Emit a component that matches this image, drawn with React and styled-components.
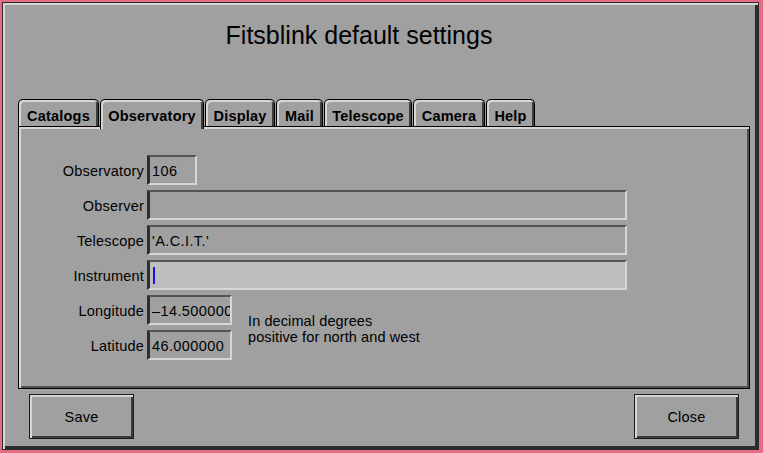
import React from "react";
import styled, { createGlobalStyle } from "styled-components";

const GlobalStyle = createGlobalStyle`
  html, body {
    margin: 0;
    padding: 0;
    background: #a0a0a0;
  }
  body {
    font-family: "Liberation Sans", Arial, sans-serif;
    color: #000;
  }
`;

const Frame = styled.div`
  width: 763px;
  height: 453px;
  box-sizing: border-box;
  border-style: solid;
  border-color: #e46c84;
  border-width: 2px 4px 3px 2px;
  display: flex;
`;

const Window = styled.div`
  flex: 1;
  display: flex;
  flex-direction: column;
  background: #a0a0a0;
  border: 1px solid #2c2c2c;
  box-shadow: inset 2px 2px 0 #d6d6d6, inset -3px -3px 0 #2c2c2c;
`;

const Title = styled.div`
  height: 96px;
  box-sizing: border-box;
  padding: 17px 43px 0 0;
  text-align: center;
  font-size: 25px;
  line-height: 30px;
`;

const TabBar = styled.div`
  height: 27px;
  display: flex;
  align-items: flex-start;
  padding-left: 15px;
  position: relative;
  z-index: 1;
`;

const Tab = styled.div`
  width: ${(p) => p.$w}px;
  height: ${(p) => (p.$active ? 30 : 27)}px;
  box-sizing: border-box;
  margin-right: 1px;
  border: 1px solid #000;
  border-bottom: none;
  border-radius: 5px 5px 0 0;
  background: #a0a0a0;
  box-shadow: inset 2px 2px 0 #d6d6d6, inset -2px 0 0 #3c3c3c;
  font-weight: bold;
  font-size: 14.5px;
  letter-spacing: 0.2px;
  text-align: center;
  padding-top: 8px;
  line-height: 16px;
`;

const Panel = styled.div`
  margin: 0 8px 0 15px;
  height: 263px;
  box-sizing: border-box;
  border: 1px solid #000;
  box-shadow: inset 2px 2px 0 #d6d6d6, inset -2px -2px 0 #505050;
  padding-top: 28px;
`;

const Row = styled.div`
  display: flex;
  align-items: center;
  height: 30px;
  margin-bottom: 5px;
`;

const Label = styled.div`
  width: 125px;
  margin-right: 3px;
  padding-top: 2px;
  text-align: right;
  font-size: 14.5px;
  letter-spacing: 0.2px;
`;

const Field = styled.div`
  width: ${(p) => p.$w}px;
  height: 30px;
  box-sizing: border-box;
  border-style: solid;
  border-width: 2px 2px 2px 3px;
  border-color: #545454 #d6d6d6 #d6d6d6 #2e2e2e;
  background: ${(p) => (p.$focus ? "#bebebe" : "#a0a0a0")};
  padding: 2px 0 0 2px;
  display: flex;
  align-items: center;
  overflow: hidden;
  white-space: nowrap;
  font-size: 14.5px;
  letter-spacing: 0.4px;
`;

const Cursor = styled.span`
  display: inline-block;
  width: 2px;
  height: 17px;
  background: #1414e6;
  margin: -2px 0 0 1px;
`;

const Group = styled.div`
  display: flex;
  align-items: center;
`;

const Note = styled.div`
  margin-left: 16px;
  font-size: 14.5px;
  line-height: 16px;
  letter-spacing: 0.1px;
  margin-top: -3px;
`;

const Buttons = styled.div`
  display: flex;
  justify-content: space-between;
  padding: 5px 19px 0 26px;
`;

const Button = styled.div`
  width: 105px;
  height: 45px;
  box-sizing: border-box;
  border: 1px solid #1c1c1c;
  box-shadow: inset 2px 2px 0 #d6d6d6, inset -2px -2px 0 #3a3a3a;
  display: flex;
  align-items: center;
  justify-content: center;
  font-size: 14.5px;
  letter-spacing: 0.2px;
`;

const tabs = [
  ["Catalogs", 81],
  ["Observatory", 104],
  ["Display", 70],
  ["Mail", 47],
  ["Telescope", 88],
  ["Camera", 72],
  ["Help", 49],
];

export default function App() {
  return (
    <>
      <GlobalStyle />
      <Frame>
        <Window>
          <Title>Fitsblink default settings</Title>
          <TabBar>
            {tabs.map(([name, w]) => (
              <Tab key={name} $w={w} $active={name === "Observatory"}>
                {name}
              </Tab>
            ))}
          </TabBar>
          <Panel>
            <Row>
              <Label>Observatory</Label>
              <Field $w={50}>106</Field>
            </Row>
            <Row>
              <Label>Observer</Label>
              <Field $w={480}></Field>
            </Row>
            <Row>
              <Label>Telescope</Label>
              <Field $w={480}>'A.C.I.T.'</Field>
            </Row>
            <Row>
              <Label>Instrument</Label>
              <Field $w={480} $focus>
                <Cursor />
              </Field>
            </Row>
            <Group>
              <div>
                <Row>
                  <Label>Longitude</Label>
                  <Field $w={85}>–14.500000</Field>
                </Row>
                <Row>
                  <Label>Latitude</Label>
                  <Field $w={85}>46.000000</Field>
                </Row>
              </div>
              <Note>
                In decimal degrees
                <br />
                positive for north and west
              </Note>
            </Group>
          </Panel>
          <Buttons>
            <Button>Save</Button>
            <Button>Close</Button>
          </Buttons>
        </Window>
      </Frame>
    </>
  );
}
